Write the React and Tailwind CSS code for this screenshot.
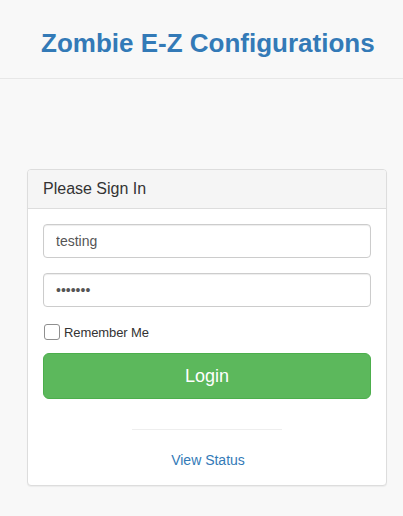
export default function App() {
  return (
    <div className="min-h-[516px] bg-[#f8f8f8] font-['Liberation_Sans',Arial,sans-serif] text-[#333]">
      {/* Top bar */}
      <header className="h-[79px] border-b border-[#e7e7e7] flex items-center pl-[41px]">
        <h1 className="text-[26px] font-bold text-[#337ab7] leading-none mt-[7px]">
          Zombie E-Z Configurations
        </h1>
      </header>

      {/* Sign in panel */}
      <div className="ml-[27px] w-[360px] mt-[90px] bg-white border border-[#ddd] rounded-[4px] shadow-[0_1px_1px_rgba(0,0,0,0.05)]">
        <div className="bg-[#f5f5f5] border-b border-[#ddd] rounded-t-[3px] px-[15px] h-[39px] flex items-center text-[16px] text-[#333]">
          Please Sign In
        </div>
        <div className="px-[15px] pt-[15px] pb-[15px]">
          <input
            type="text"
            defaultValue="testing"
            className="block w-full h-[34px] px-[12px] border border-[#ccc] rounded-[4px] text-[14px] text-[#555] bg-white shadow-[inset_0_1px_1px_rgba(0,0,0,0.075)] outline-none"
          />
          <input
            type="password"
            defaultValue="testing"
            className="block w-full h-[34px] mt-[15px] px-[12px] border border-[#ccc] rounded-[4px] text-[14px] text-[#555] bg-white shadow-[inset_0_1px_1px_rgba(0,0,0,0.075)] outline-none"
          />
          <label className="flex items-center gap-[4px] mt-[17px] text-[13px] tracking-[-0.1px] text-[#333] leading-none">
            <span className="ml-[1px] w-[16px] h-[16px] border border-[#8f8f8f] rounded-[3px] bg-white" />
            Remember Me
          </label>
          <button className="w-full h-[46px] mt-[13px] bg-[#5cb85c] border border-[#4cae4c] rounded-[6px] text-white text-[18px]">
            Login
          </button>
          <div className="mx-auto mt-[30px] w-[150px] border-t border-[#eee]" />
          <div className="text-center mt-[20px] leading-[20px]">
            <a href="#" className="text-[14px] text-[#337ab7] ml-[2px]">
              View Status
            </a>
          </div>
        </div>
      </div>
    </div>
  )
}
